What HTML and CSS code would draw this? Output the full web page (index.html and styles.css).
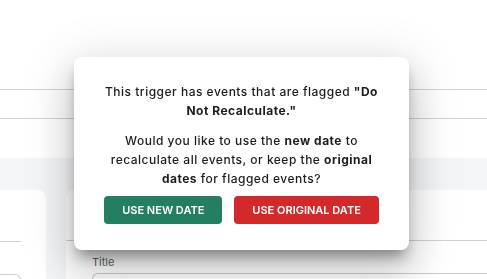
FILE: index.html
```html
<!DOCTYPE html>
<html lang="en">
<head>
<meta charset="utf-8">
<title>Do Not Recalculate</title>
<link rel="stylesheet" href="styles.css">
</head>
<body>
<div class="page">
  <header class="topbar"></header>
  <nav class="tabs"></nav>
  <div class="spacer"></div>
  <div class="band"></div>
  <main class="content">
    <section class="card card-left">
      <div class="card-head"></div>
      <div class="field-box"></div>
    </section>
    <section class="card card-right">
      <div class="card-head"></div>
      <div class="field">
        <label class="field-label">Title</label>
        <div class="field-input"></div>
      </div>
    </section>
  </main>
</div>

<div class="dialog" role="dialog">
  <p class="msg">This trigger has events that are flagged <strong>"Do Not Recalculate."</strong></p>
  <p class="msg">Would you like to use the <strong>new date</strong> to recalculate all events, or keep the <strong>original dates</strong> for flagged events?</p>
  <div class="actions">
    <button class="btn btn-green">USE NEW DATE</button>
    <button class="btn btn-red">USE ORIGINAL DATE</button>
  </div>
</div>
</body>
</html>
```

FILE: styles.css
```css
* { box-sizing: border-box; }

html, body {
  margin: 0;
  padding: 0;
  background: #ffffff;
  font-family: Inter, "Noto Sans", "Liberation Sans", sans-serif;
  overflow: hidden;
}

.page {
  width: 487px;
  height: 279px;
  display: flex;
  flex-direction: column;
  overflow: hidden;
}

.page > * {
  flex-shrink: 0;
}

.topbar {
  height: 90px;
  border-bottom: 1px solid #cdd3da;
}

.tabs {
  height: 29px;
  border-bottom: 1px solid #cdd3da;
}

.spacer {
  height: 39px;
}

.band {
  height: 32px;
  background: #f4f5f7;
}

.content {
  flex: 1 0 auto;
  display: flex;
  gap: 20px;
  background: #f4f5f7;
}

.card {
  background: #ffffff;
}

.card-left {
  width: 46px;
  border-radius: 0 8px 0 0;
  padding-right: 25px;
}

.card-left .card-head {
  height: 52px;
  border-bottom: 1px solid #cdd3da;
}

.field-box {
  margin-top: 32px;
  height: 20px;
  border: 1px solid #c8ced6;
  border-left: none;
  border-radius: 0 6px 0 0;
}

.card-right {
  flex: 1;
  border-radius: 8px 0 0 0;
}

.card-right .card-head {
  height: 51px;
  border-bottom: 1px solid #cdd3da;
}

.field {
  padding: 14px 0 0 26px;
}

.field-label {
  display: block;
  font-size: 11px;
  line-height: 14px;
  color: #5b5f66;
  margin-bottom: 4px;
}

.field-input {
  height: 30px;
  border: 1px solid #c3cad3;
  border-right: none;
  border-radius: 6px 0 0 0;
}

.dialog {
  position: fixed;
  left: 74px;
  top: 57px;
  width: 335px;
  padding: 25px 24px 26px;
  background: #ffffff;
  border-radius: 8px;
  box-shadow:
    0 10px 14px -4px rgba(0, 0, 0, 0.38),
    0 22px 38px 4px rgba(0, 0, 0, 0.14),
    0 8px 46px 10px rgba(0, 0, 0, 0.10);
  text-align: center;
}

.msg {
  margin: 0 0 11px;
  font-size: 12px;
  line-height: 19px;
  font-weight: 500;
  letter-spacing: 0.5px;
  color: #1b1c1e;
}

.msg:last-of-type {
  margin-bottom: 8px;
}

.msg strong {
  font-weight: 700;
}

.actions {
  display: flex;
  justify-content: center;
  gap: 12px;
}

.btn {
  height: 28px;
  padding: 0 18px;
  border: none;
  border-radius: 4px;
  color: #ffffff;
  font-family: Inter, "Noto Sans", "Liberation Sans", sans-serif;
  font-size: 11px;
  font-weight: 600;
  letter-spacing: 0;
  white-space: nowrap;
  cursor: pointer;
}

.btn-green {
  background: #247f62;
}

.btn-red {
  background: #d4292b;
}
```
